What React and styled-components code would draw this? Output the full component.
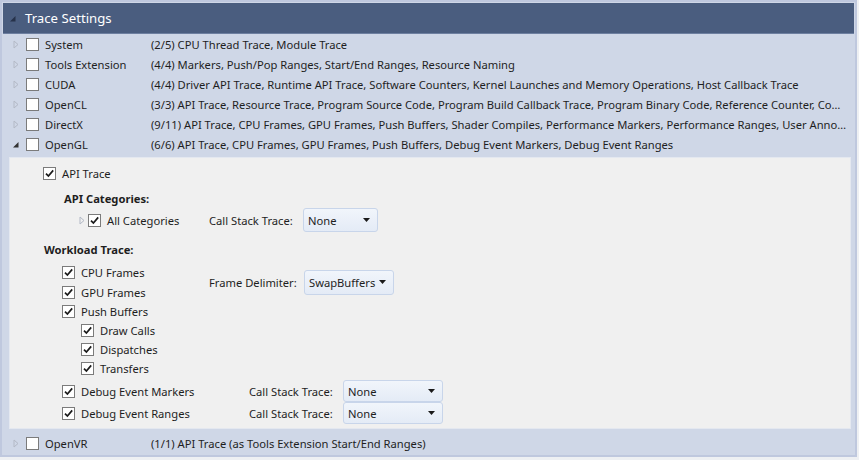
import React from 'react';
import styled, { createGlobalStyle } from 'styled-components';

const GlobalStyle = createGlobalStyle`
  html, body {
    margin: 0;
    padding: 0;
    background: #eef0f3;
  }
  body {
    font-family: 'Noto Sans', 'Open Sans', sans-serif;
    font-size: 11.2px;
    color: #1e1e1e;
  }
`;

const Frame = styled.div`
  width: 853px;
  height: 453px;
  border: 2px solid #bfc8de;
  background: #cfd7e7;
  display: flex;
  flex-direction: column;
  overflow: hidden;
`;

const Header = styled.div`
  height: 30px;
  margin: 1px 1px 0 1px;
  background: #4a5d7f;
  border-bottom: 1px solid #6d7fa0;
  display: flex;
  align-items: center;
  gap: 8px;
  padding-left: 6px;
  color: #fff;
  font-size: 13.2px;
`;

const TreeRow = styled.div`
  height: 20px;
  display: flex;
  align-items: center;
  padding-left: 10px;
  padding-right: 8px;
  white-space: nowrap;
`;

const Expander = styled.span`
  width: 8px;
  height: 9px;
  display: inline-flex;
  align-items: center;
  justify-content: center;
  margin-right: ${p => p.$gap ?? 6}px;
  flex: none;
`;

const Name = styled.span`
  width: 106px;
  flex: none;
`;

const Desc = styled.span`
  flex: 1;
  min-width: 0;
  overflow: hidden;
  text-overflow: ellipsis;
`;

const Box = styled.span`
  width: 11px;
  height: 11px;
  border: 1px solid #7b7b7b;
  background: #fff;
  display: inline-flex;
  align-items: center;
  justify-content: center;
  margin-right: 6px;
  flex: none;
`;

const Panel = styled.div`
  margin: 3px 4px 4px 7px;
  background: #f0f0f0;
  border: 1px solid #e4e8f0;
  padding: 5px 0 4px 0;
  display: flex;
  flex-direction: column;
`;

const Line = styled.div`
  height: ${p => p.$h ?? 20}px;
  margin-top: ${p => p.$mt ?? 0}px;
  padding-left: ${p => p.$indent ?? 0}px;
  display: flex;
  align-items: center;
  white-space: nowrap;
`;

const Heading = styled.span`
  font-weight: bold;
`;

const Option = styled.label`
  display: flex;
  align-items: center;
  width: ${p => (p.$w ? `${p.$w}px` : 'auto')};
  flex: none;
`;

const Group = styled.div`
  display: flex;
  align-items: center;
  margin-top: ${p => p.$mt ?? 0}px;
`;

const Stack = styled.div`
  box-sizing: border-box;
  display: flex;
  flex-direction: column;
  width: ${p => p.$w}px;
  padding-left: ${p => p.$indent ?? 0}px;
  flex: none;
`;

const FieldLabel = styled.span`
  width: ${p => p.$w}px;
  flex: none;
`;

const Select = styled.div`
  width: ${p => p.$w}px;
  height: ${p => p.$h ?? 22}px;
  box-sizing: border-box;
  border: 1px solid #c8d5ea;
  border-radius: 3px;
  background: linear-gradient(#f1f5fb, #e4ebf6);
  display: flex;
  align-items: center;
  justify-content: space-between;
  padding: 0 7px 0 4px;
  flex: none;
`;

const Check = ({ on }) => (
  <Box>
    {on && (
      <svg width="11" height="11" viewBox="0 0 11 11">
        <path d="M2 5.6 L4.4 8 L9.2 2.4" fill="none" stroke="#1a1a1a" strokeWidth="1.7" />
      </svg>
    )}
  </Box>
);

const Tri = ({ open, color }) => (
  <svg width="8" height="9" viewBox="0 0 8 9">
    {open ? (
      <path d="M1 7.5 L6.5 7.5 L6.5 2 Z" fill={color || '#333'} />
    ) : (
      <path d="M2 1 L6 4.5 L2 8 Z" fill="none" stroke="#b3b9c6" strokeWidth="1" />
    )}
  </svg>
);

const Arrow = () => (
  <svg width="7" height="4" viewBox="0 0 7 4">
    <path d="M0 0 L7 0 L3.5 4 Z" fill="#1a1a1a" />
  </svg>
);

const apis = [
  ['System', '(2/5) CPU Thread Trace, Module Trace'],
  ['Tools Extension', '(4/4) Markers, Push/Pop Ranges, Start/End Ranges, Resource Naming'],
  ['CUDA', '(4/4) Driver API Trace, Runtime API Trace, Software Counters, Kernel Launches and Memory Operations, Host Callback Trace'],
  ['OpenCL', '(3/3) API Trace, Resource Trace, Program Source Code, Program Build Callback Trace, Program Binary Code, Reference Counter, Command Queue Trace'],
  ['DirectX', '(9/11) API Trace, CPU Frames, GPU Frames, Push Buffers, Shader Compiles, Performance Markers, Performance Ranges, User Annotations'],
  ['OpenGL', '(6/6) API Trace, CPU Frames, GPU Frames, Push Buffers, Debug Event Markers, Debug Event Ranges', true],
];

const Tree = ({ name, desc, open }) => (
  <TreeRow>
    <Expander>
      <Tri open={open} />
    </Expander>
    <Check />
    <Name>{name}</Name>
    <Desc>{desc}</Desc>
  </TreeRow>
);

const Item = ({ children, w }) => (
  <Option $w={w}>
    <Check on />
    {children}
  </Option>
);

const App = () => (
  <>
    <GlobalStyle />
    <Frame>
      <Header>
        <Tri open color="#26324a" />
        Trace Settings
      </Header>
      {apis.map(([name, desc, open]) => (
        <Tree key={name} name={name} desc={desc} open={open} />
      ))}
      <Panel>
        <Line $indent={33}>
          <Item>API Trace</Item>
        </Line>
        <Line $indent={54} $mt={5}>
          <Heading>API Categories:</Heading>
        </Line>
        <Line $indent={68} $h={24}>
          <Expander $gap={2}>
            <Tri />
          </Expander>
          <Item w={121}>All Categories</Item>
          <FieldLabel $w={94}>Call Stack Trace:</FieldLabel>
          <Select $w={75} $h={24}>
            None <Arrow />
          </Select>
        </Line>
        <Line $indent={34} $mt={7}>
          <Heading>Workload Trace:</Heading>
        </Line>
        <Group $mt={3}>
          <Stack $indent={52} $w={199}>
            <Line $h={20}>
              <Item>CPU Frames</Item>
            </Line>
            <Line $h={20}>
              <Item>GPU Frames</Item>
            </Line>
          </Stack>
          <FieldLabel $w={95}>Frame Delimiter:</FieldLabel>
          <Select $w={90} $h={25}>
            SwapBuffers <Arrow />
          </Select>
        </Group>
        <Line $indent={52} $h={19}>
          <Item>Push Buffers</Item>
        </Line>
        <Line $indent={71} $h={19}>
          <Item>Draw Calls</Item>
        </Line>
        <Line $indent={71} $h={19}>
          <Item>Dispatches</Item>
        </Line>
        <Line $indent={71} $h={19}>
          <Item>Transfers</Item>
        </Line>
        <Line $indent={52} $h={22} $mt={2}>
          <Item w={187}>Debug Event Markers</Item>
          <FieldLabel $w={94}>Call Stack Trace:</FieldLabel>
          <Select $w={100}>
            None <Arrow />
          </Select>
        </Line>
        <Line $indent={52} $h={22}>
          <Item w={187}>Debug Event Ranges</Item>
          <FieldLabel $w={94}>Call Stack Trace:</FieldLabel>
          <Select $w={100}>
            None <Arrow />
          </Select>
        </Line>
      </Panel>
      <Tree name="OpenVR" desc="(1/1) API Trace (as Tools Extension Start/End Ranges)" />
    </Frame>
  </>
);

export default App;
